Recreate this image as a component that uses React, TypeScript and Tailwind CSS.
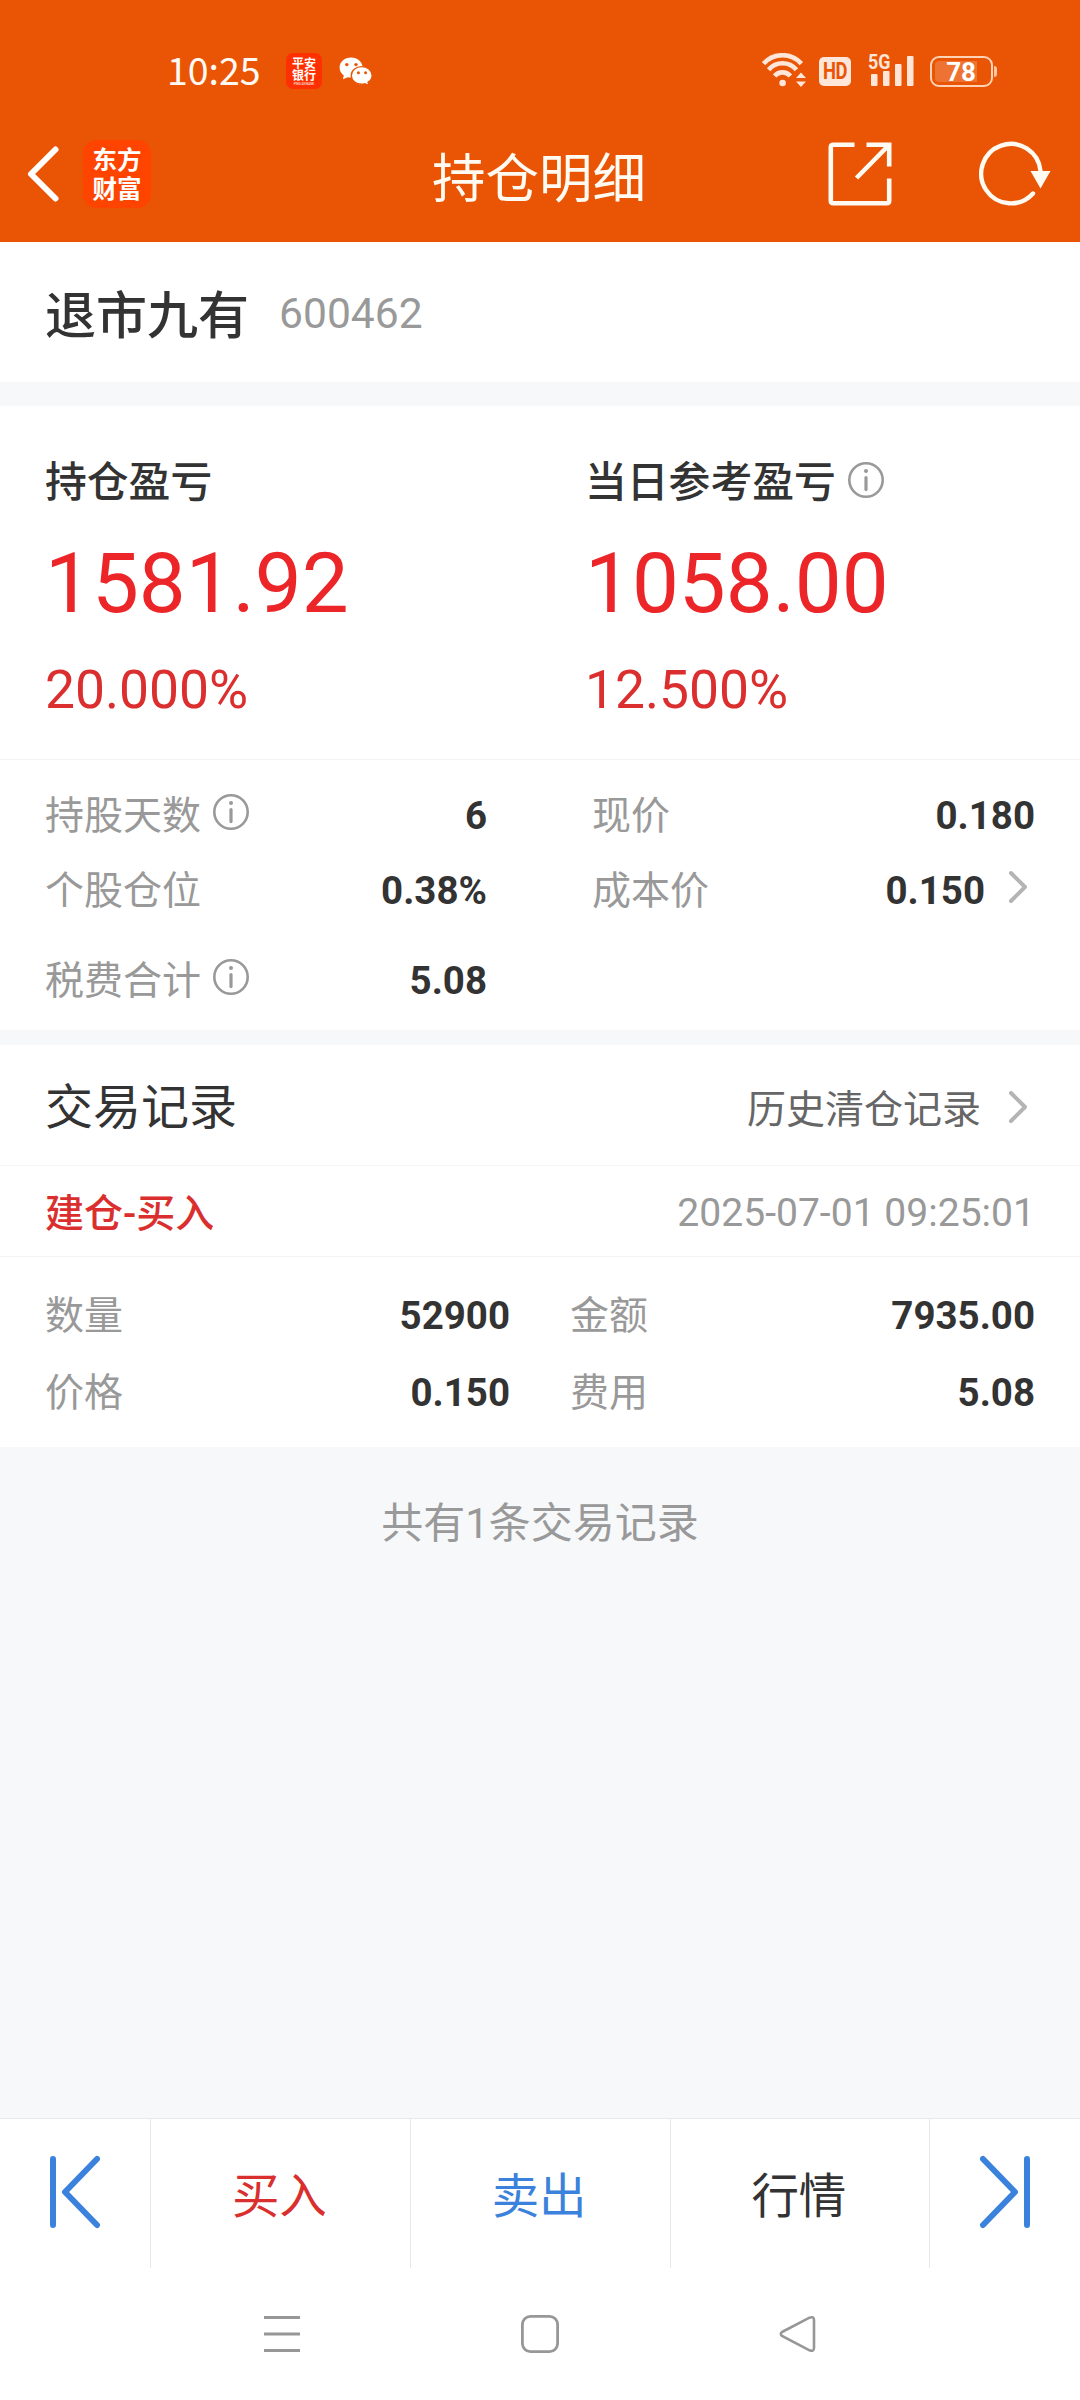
import type { ReactNode } from "react";

function InfoIcon() {
  return (
    <svg className="h-9 w-9 shrink-0" viewBox="0 0 36 36" fill="none" stroke="#999999">
      <circle cx="18" cy="18" r="16.7" strokeWidth="2.6" />
      <path d="M18 15.6V27.6" strokeWidth="3.2" strokeLinecap="round" />
      <circle cx="18" cy="9" r="2" fill="#999999" stroke="none" />
    </svg>
  );
}

function Chevron() {
  return (
    <svg className="h-[34px] w-5 shrink-0" viewBox="0 0 20 34" fill="none" stroke="#b4b4b4" strokeWidth="4" strokeLinecap="round" strokeLinejoin="round">
      <path d="M3 3L17 17L3 31" />
    </svg>
  );
}

function WechatIcon() {
  return (
    <svg className="h-7 w-[34px]" viewBox="0 0 34 28">
      <path d="M12 0.5C5.4 0.5 0.6 4.9 0.6 10.6C0.6 13.9 2.1 16.5 4.8 18.4L3.9 22.2L8.6 20.2C9.7 20.5 10.8 20.6 12 20.6C18.6 20.6 23.6 16.2 23.6 10.6C23.6 4.9 18.6 0.5 12 0.5Z" fill="#fff" />
      <path d="M22.6 9.6C16.8 9.6 12.3 13.5 12.3 18.4C12.3 23.4 16.8 27.2 22.6 27.2C23.7 27.2 24.8 27.1 25.7 26.8L30 28.4L29.1 25.2C31.7 23.5 33.2 21.2 33.2 18.4C33.2 13.5 28.6 9.6 22.6 9.6Z" fill="#fff" stroke="#e95504" strokeWidth="1.4" />
      <g fill="#e95504">
        <circle cx="7.8" cy="7.6" r="1.7" />
        <circle cx="17" cy="7.6" r="1.7" />
        <circle cx="19.4" cy="15.8" r="1.5" />
        <circle cx="26.6" cy="15.8" r="1.5" />
      </g>
    </svg>
  );
}

function WifiIcon() {
  return (
    <svg className="h-[34px] w-11" viewBox="0 0 44 34" fill="none" stroke="#ffe6d8" strokeWidth="4.6">
      <path d="M1.6 10.6A25.5 25.5 0 0 1 39.4 10.6" />
      <path d="M6.6 16.8A18 18 0 0 1 34.4 16.8" />
      <path d="M12.6 23A10.5 10.5 0 0 1 28.4 23" />
      <circle cx="20.6" cy="30" r="3.3" fill="#ffe6d8" stroke="none" />
      <path d="M39 19.5L44 25H34ZM39 34L34 28.5H44Z" fill="#ffe6d8" stroke="none" />
    </svg>
  );
}

function StatusBar() {
  return (
    <div className="flex h-[106px] items-start pt-[53px] pr-[83px] pl-[167px]">
      <span className="-mt-[3px] w-[93px] font-['Noto_Sans_CJK_SC',sans-serif] text-[37.5px] leading-[38px] whitespace-nowrap text-[#fffaf4]">10:25</span>
      <div className="ml-[26px] flex h-9 w-9 flex-col items-center rounded-[7px] bg-[#ff3000] pt-[5px] text-[12px] leading-[12px] font-bold text-white">
        <span>平安</span>
        <span>银行</span>
        <span className="mt-px text-[3px] leading-[3px] font-normal">PING AN BANK</span>
      </div>
      <div className="ml-[17px] pt-1">
        <WechatIcon />
      </div>
      <div className="ml-auto flex items-start">
        <WifiIcon />
        <span className="mt-1 ml-[13px] flex h-[29px] w-8 items-center justify-center rounded-[5px] bg-[#ffe6d8] text-[23px] leading-none font-bold tracking-[-0.5px] text-[#e95504]">
          <span className="scale-x-80">HD</span>
        </span>
        <div className="relative ml-[17px] h-[34px] w-[47px]">
          <span className="absolute top-0 left-0 origin-left scale-x-85 text-[21px] leading-[19px] font-bold text-[#ffe6d8]">5G</span>
          <svg className="absolute top-0 left-0 h-[34px] w-[47px]" viewBox="0 0 47 34" fill="#ffe6d8">
            <rect x="3" y="21" width="6.5" height="12" rx="1" />
            <rect x="15" y="18" width="6.5" height="15" rx="1" />
            <rect x="27" y="11" width="6.5" height="22" rx="1" />
            <rect x="39" y="3" width="6.5" height="30" rx="1" />
          </svg>
        </div>
        <div className="mt-[3px] ml-[15px] flex items-center gap-px">
          <div className="flex h-[31px] w-[63px] items-center rounded-[9px] border-2 border-[#ffd3b4] p-[3px]">
            <div className="flex h-[21px] w-[42px] items-center justify-end rounded-l-[4px] bg-[#ee7231] text-[26px] leading-none font-bold text-white">
              <span className="pr-px">78</span>
            </div>
          </div>
          <div className="h-[11px] w-[3px] rounded-r-sm bg-[#ffc49c]" />
        </div>
      </div>
    </div>
  );
}

function TitleBar() {
  return (
    <div className="relative flex h-[136px] items-center pr-[29px] pl-[26px]">
      <svg className="h-[58px] w-[34px]" viewBox="0 0 34 58" fill="none" stroke="#fff" strokeWidth="6" strokeLinecap="round" strokeLinejoin="round">
        <path d="M29.5 4.5L5 29L29.5 53.5" />
      </svg>
      <div className="ml-[23px] flex h-[68px] w-[68px] flex-col items-center justify-center rounded-[14px] bg-[#ff4400] pt-px text-[24.5px] leading-[29px] font-bold text-white">
        <span>东方</span>
        <span>财富</span>
      </div>
      <h1 className="absolute inset-x-0 top-[38px] pr-[2px] text-center text-[53.5px] leading-[72px] text-[#fffaf2]">持仓明细</h1>
      <svg className="ml-auto h-16 w-16" viewBox="0 0 64 64" fill="none" stroke="#fffaf2" strokeWidth="4.6">
        <path d="M26.5 2.8H5.3Q2.8 2.8 2.8 5.3V58.7Q2.8 61.2 5.3 61.2H58.7Q61.2 61.2 61.2 58.7V36.5" />
        <path d="M38.5 2.8H61.2V24.5M60.5 3.5L28.5 36" />
      </svg>
      <svg className="ml-[87px] h-[66px] w-[72px]" viewBox="0 0 72 66" fill="none" stroke="#fffaf2" strokeWidth="4.4">
        <path d="M61.5 30A29.7 29.7 0 1 0 54 52.5" strokeLinecap="round" />
        <path d="M51.5 30H71.5L61.5 47.5Z" fill="#fffaf2" stroke="none" />
      </svg>
    </div>
  );
}

function Profit({ label, value, percent, info }: { label: string; value: string; percent: string; info?: boolean }) {
  return (
    <div>
      <div className="flex h-[60px] items-center gap-3 text-[41.8px] leading-[60px] font-medium text-[#333333]">
        <span className="h-[60px]">{label}</span>
        {info && (
          <span className="mb-[6px]">
            <InfoIcon />
          </span>
        )}
      </div>
      <div className="mt-[19px] h-[104px] text-[83.5px] leading-[104px] text-[#ec2528]">{value}</div>
      <div className="mt-5 h-[68px] text-[53.4px] leading-[68px] text-[#da2f2e]">{percent}</div>
    </div>
  );
}

function Stat({ label, value, info, more, className }: { label: string; value: string; info?: boolean; more?: boolean; className?: string }) {
  return (
    <div className={`flex h-[75px] items-center text-[39px] leading-[75px] ${className ?? ""}`}>
      <span className="text-[#999999]">{label}</span>
      {info && (
        <span className="mb-[9px] ml-3">
          <InfoIcon />
        </span>
      )}
      <span className="mb-[3px] ml-auto text-[38.5px] font-bold text-[#333333]">{value}</span>
      {more && (
        <span className="mr-[7px] mb-[9px] ml-[23px]">
          <Chevron />
        </span>
      )}
    </div>
  );
}

function Tab({ children, className }: { children: ReactNode; className: string }) {
  return <div className={`flex w-[259.75px] items-center justify-center border-l border-[#e8e8e8] pt-2 pr-[2px] text-[47.5px] leading-none ${className}`}>{children}</div>;
}

export default function App() {
  return (
    <div className="flex h-[2400px] w-[1080px] flex-col overflow-hidden bg-[#f7f8fa] font-['Roboto','Noto_Sans_CJK_SC',sans-serif]">
      <header className="h-[242px] bg-[#e95504]">
        <StatusBar />
        <TitleBar />
      </header>

      <section className="flex h-[140px] items-center bg-white pt-[5px] pl-[45px]">
        <span className="mt-1 text-[51px] leading-[70px] font-medium text-[#333333]">退市九有</span>
        <span className="mb-[3px] ml-[30px] text-[42.6px] leading-[60px] text-[#999999]">600462</span>
      </section>

      <section className="mt-6 bg-white">
        <div className="grid h-[354px] grid-cols-[540px_1fr] border-b border-[#f4f4f5] pt-[47px] pl-[45px]">
          <Profit label="持仓盈亏" value="1581.92" percent="20.000%" />
          <Profit label="当日参考盈亏" value="1058.00" percent="12.500%" info />
        </div>
        <div className="grid h-[270px] grid-cols-[442px_443px] content-start gap-x-[105px] px-[45px] pt-[19px]">
          <Stat label="持股天数" value="6" info />
          <Stat label="现价" value="0.180" />
          <Stat label="个股仓位" value="0.38%" />
          <Stat label="成本价" value="0.150" more />
          <Stat label="税费合计" value="5.08" info className="mt-[15px]" />
        </div>
      </section>

      <section className="mt-[15px] h-[402px] bg-white">
        <div className="flex h-[121px] items-center border-b border-[#f4f4f5] px-[45px] pt-1">
          <h2 className="mt-px text-[48px] leading-[70px] text-[#333333]">交易记录</h2>
          <span className="mt-[6px] ml-auto text-[39px] leading-[60px] text-[#666666]">历史清仓记录</span>
          <span className="mr-[7px] ml-[27px]">
            <Chevron />
          </span>
        </div>
        <div className="flex h-[91px] items-center justify-between border-b border-[#f4f4f5] px-[45px] pt-1 text-[39px] leading-[60px]">
          <span className="mt-px font-medium text-[#da2f2e]">建仓-买入</span>
          <span className="text-[39.1px] text-[#999999]">2025-07-01 09:25:01</span>
        </div>
        <div className="grid grid-cols-[465px_465px] gap-x-[60px] gap-y-[2px] px-[45px] pt-[22px]">
          <Stat label="数量" value="52900" />
          <Stat label="金额" value="7935.00" />
          <Stat label="价格" value="0.150" />
          <Stat label="费用" value="5.08" />
        </div>
      </section>

      <p className="mt-[47px] text-center text-[42px] leading-[60px] text-[#999999]">共有1条交易记录</p>

      <nav className="mt-auto flex h-[150px] shrink-0 border-t border-[#e8e9eb] bg-white">
        <div className="flex w-[150px] items-center justify-center">
          <svg className="mb-[3px] h-[74px] w-[52px]" viewBox="0 0 52 74" fill="none" stroke="#3b82dc" strokeWidth="6" strokeLinecap="round" strokeLinejoin="round">
            <path d="M4 4V70M48 4L16 37L48 70" />
          </svg>
        </div>
        <Tab className="text-[#d92f2e]">买入</Tab>
        <Tab className="text-[#3b82dc]">卖出</Tab>
        <Tab className="text-[#333333]">行情</Tab>
        <div className="flex flex-1 items-center justify-center border-l border-[#e8e8e8]">
          <svg className="mb-[3px] h-[74px] w-[52px]" viewBox="0 0 52 74" fill="none" stroke="#3b82dc" strokeWidth="6" strokeLinecap="round" strokeLinejoin="round">
            <path d="M48 4V70M4 4L36 37L4 70" />
          </svg>
        </div>
      </nav>

      <div className="flex h-[132px] shrink-0 items-center justify-center gap-[220px] bg-white">
        <svg className="h-[38px] w-[38px]" viewBox="0 0 38 38" stroke="#979797" strokeWidth="3">
          <path d="M1 2.5H37M1 19H37M1 35.5H37" />
        </svg>
        <svg className="h-[38px] w-[38px]" viewBox="0 0 38 38" fill="none" stroke="#979797" strokeWidth="2.8">
          <rect x="1.4" y="1.4" width="35.2" height="35.2" rx="8" />
        </svg>
        <svg className="h-[38px] w-[38px]" viewBox="0 0 38 38" fill="none" stroke="#979797" strokeWidth="2.6">
          <path d="M3 17L30.5 2.7Q35 1 35 5V33Q35 37 30.5 35.3L3 21Q0.6 19 3 17Z" />
        </svg>
      </div>
    </div>
  );
}
